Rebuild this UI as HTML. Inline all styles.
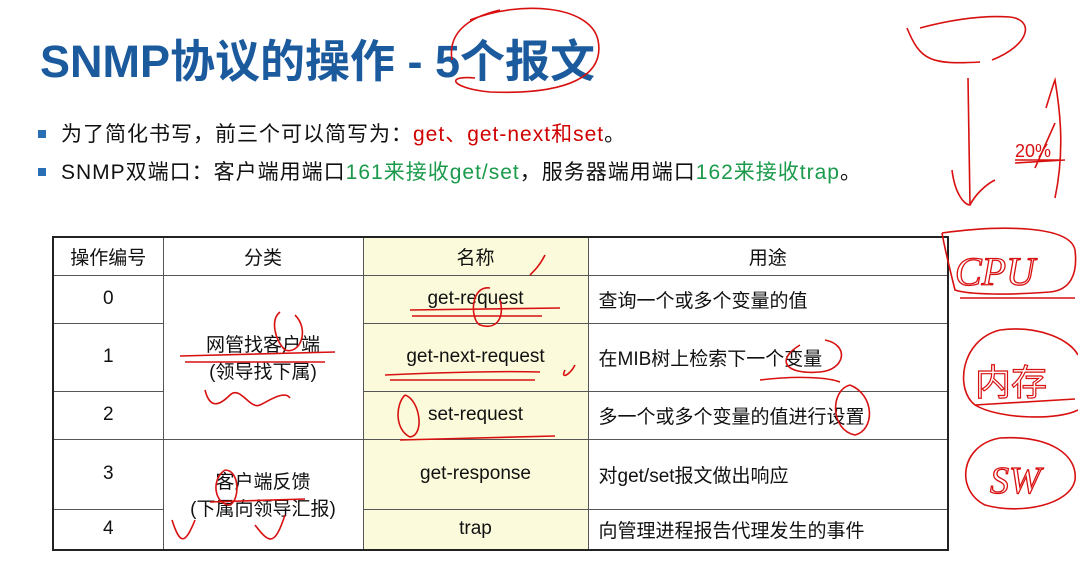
<!DOCTYPE html>
<html><head><meta charset="utf-8"><style>
body{margin:0;width:1078px;height:569px;background:#fff;position:relative;overflow:hidden;font-family:"Liberation Sans","Noto Sans CJK SC",sans-serif;}
.t{position:absolute;left:40px;top:25px;font-size:45px;font-weight:bold;color:#1b5a9c;letter-spacing:0px;white-space:nowrap}
.b{position:absolute;left:38px;font-size:21px;color:#111;white-space:nowrap;letter-spacing:1px}
.b:before{content:"";display:inline-block;width:8px;height:8px;background:#2a6fb5;margin-right:15px;vertical-align:3px}
.r{color:#d00000}.g{color:#1a9a4a}
table{position:absolute;left:52px;top:236px;border-collapse:collapse;border:2px solid #222;font-size:19px;color:#111}
td{border:1px solid #555;text-align:center;padding:0}
td.l{text-align:left;padding-left:10px}
.y{background:#fbfbdc}
svg{position:absolute;left:0;top:0}
</style></head><body>
<div class="t">SNMP协议的操作 - 5个报文</div>
<div class="b" style="top:118px">为了简化书写，前三个可以简写为：<span class="r">get、get-next和set</span>。</div>
<div class="b" style="top:156px">SNMP双端口：客户端用端口<span class="g">161来接收get/set</span>，服务器端用端口<span class="g">162来接收trap</span>。</div>
<table>
<colgroup><col style="width:110px"><col style="width:200px"><col style="width:225px"><col style="width:360px"></colgroup>
<tr style="height:38px"><td>操作编号</td><td>分类</td><td class="y">名称</td><td>用途</td></tr>
<tr style="height:48px"><td>0</td><td rowspan="3">网管找客户端<br>(领导找下属)</td><td class="y">get-request</td><td class="l">查询一个或多个变量的值</td></tr>
<tr style="height:68px"><td>1</td><td class="y">get-next-request</td><td class="l">在MIB树上检索下一个变量</td></tr>
<tr style="height:48px"><td>2</td><td class="y">set-request</td><td class="l">多一个或多个变量的值进行设置</td></tr>
<tr style="height:70px"><td>3</td><td rowspan="2">客户端反馈<br>(下属向领导汇报)</td><td class="y">get-response</td><td class="l">对get/set报文做出响应</td></tr>
<tr style="height:41px"><td>4</td><td class="y">trap</td><td class="l">向管理进程报告代理发生的事件</td></tr>
</table>
<svg width="1078" height="569" fill="none" stroke="#d81010" stroke-width="1.6">
<path d="M470 20 C520 0 590 5 598 40 C605 75 570 95 490 92 C450 88 445 75 475 78 M452 60 C448 35 465 18 500 10"/>
<path d="M907 28 C920 60 930 65 980 62 M992 60 C1030 45 1035 20 1010 17 C980 15 950 20 920 28"/>
<path d="M968 78 L970 205 M952 170 C955 195 965 205 970 205 C975 195 985 185 995 180"/>
<path d="M1046 108 C1050 95 1053 85 1055 80 C1060 110 1065 150 1055 198 M1015 160 l45 0 M1015 163 l50 -3 M1035 168 l20 -45"/>
<text x="1015" y="157" font-family="Liberation Sans" font-size="18" fill="#d81010" stroke="none">20%</text>
<path d="M942 233 C1000 225 1070 225 1075 250 C1078 275 1070 290 1050 292 C1010 295 970 295 955 290 C950 270 945 250 942 233 M960 298 l115 0"/>
<text x="955" y="285" font-family="Liberation Serif" font-style="italic" font-size="40" fill="none" stroke="#d81010" stroke-width="1.3">CPU</text>
<path d="M1000 330 C960 340 955 390 975 405 C1000 420 1060 420 1078 410 M1000 330 C1040 325 1070 340 1078 355 M975 405 l100 -6"/>
<text x="975" y="395" font-family="Noto Sans CJK SC" font-size="36" fill="none" stroke="#d81010" stroke-width="1.2">内存</text>
<path d="M1000 438 C960 445 955 490 985 505 C1020 515 1070 505 1075 480 C1078 455 1050 435 1000 438"/>
<text x="990" y="493" font-family="Liberation Serif" font-style="italic" font-size="38" fill="none" stroke="#d81010" stroke-width="1.3">SW</text>
<path d="M180 356 l155 -4 M185 362 l140 0 M205 390 C210 410 220 405 230 395 C240 385 250 410 260 405 C270 400 285 390 290 398 M280 312 C270 320 275 340 285 350 C300 355 310 330 295 315"/>
<path d="M410 310 l150 -2 M412 316 l130 0 M490 288 C470 285 470 320 480 325 C495 330 505 320 500 300 M530 275 C535 270 540 265 545 255"/>
<path d="M385 375 C450 372 510 371 540 372 M390 380 l145 0 M565 370 C560 380 570 375 575 365 M800 345 C775 360 785 375 820 372 C845 370 850 345 825 340 M760 380 C800 375 830 378 840 382"/>
<path d="M405 395 C395 405 395 430 410 437 C425 435 420 400 405 395 M400 440 l155 -4 M850 385 C830 390 830 430 855 435 C875 430 875 395 850 385"/>
<path d="M225 470 C210 480 215 505 230 505 C240 500 240 470 225 470 M210 502 l95 -3 M172 520 C180 545 185 545 195 520 M255 525 C270 545 275 545 285 515"/>
</svg>
</body></html>
